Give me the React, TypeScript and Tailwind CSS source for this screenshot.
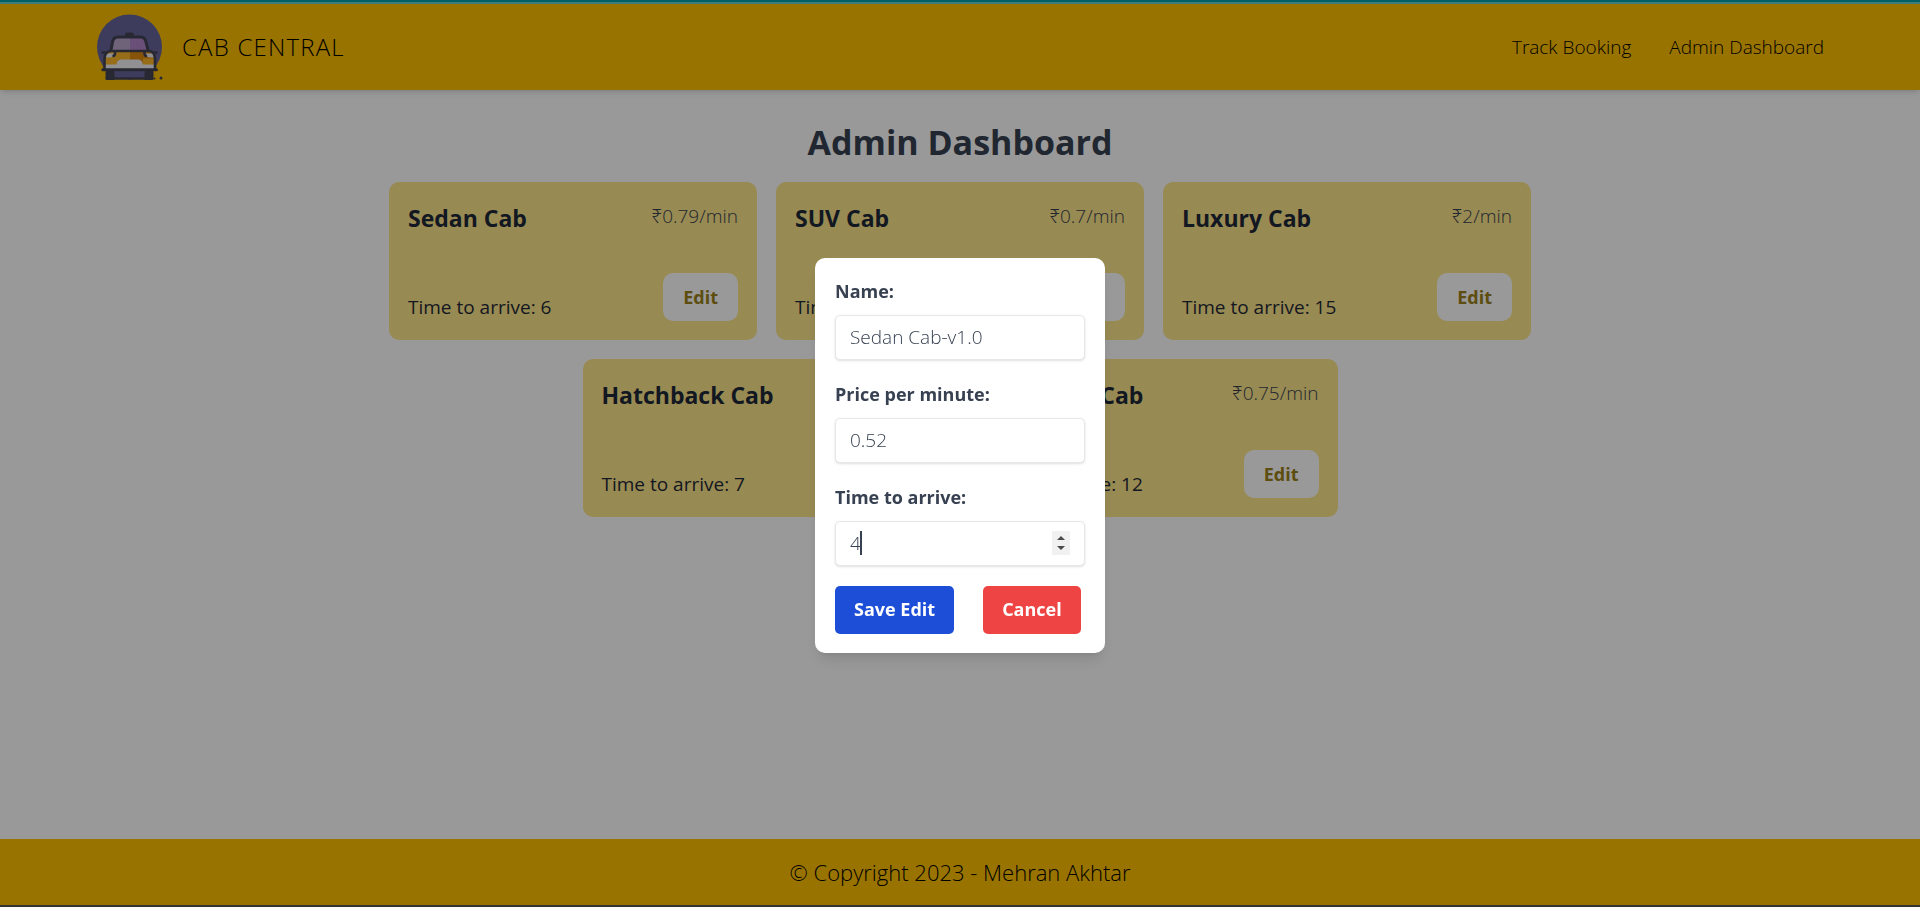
import { useState } from "react";

type Cab = { name: string; price: string; time: number };

const cabs: Cab[] = [
  { name: "Sedan Cab", price: "0.79", time: 6 },
  { name: "SUV Cab", price: "0.7", time: 10 },
  { name: "Luxury Cab", price: "2", time: 15 },
  { name: "Hatchback Cab", price: "0.85", time: 7 },
  { name: "Premium Cab", price: "0.75", time: 12 },
];

function Logo() {
  return (
    <svg viewBox="-1 -2 68 70" className="h-[70px] w-[68px]" aria-hidden="true">
      <circle cx="32.5" cy="33" r="32.5" fill="#68659c" />
      <rect x="10" y="57" width="46" height="8" fill="#68659c" />
      <path d="M14 38 L16 27 Q17 23.500 21 23.500 H33 V38 Z" fill="#b9a6cc" />
      <path d="M33 23.500 H43 Q48 23.500 49 27 L51 38 H33 Z" fill="#b184c9" />
      <path d="M8 55 V44 Q8 38 13 38 H33 V55 Z" fill="#fdb62b" />
      <path d="M33 38 H52 Q58 38 58 44 V55 H33 Z" fill="#e08a10" />
      <path d="M46 44.500 H58 V52 H46 Z" fill="#fdb62b" />
      <path d="M8.500 39.500 H17.500 Q17.500 43.500 12 43.500 H8.500 Z" fill="#f0eef2" />
      <path d="M48.500 39.500 H57.500 V43.500 H54 Q48.500 43.500 48.500 39.500 Z" fill="#f0eef2" />
      <path d="M8 50.500 H19.500 Q20 45.500 25 45.500 H41 Q45 45.500 46 50.500 H58 V55.500 H8 Z" fill="#f2f0f4" />
      <rect x="28" y="18.500" width="9" height="5" rx="2" fill="#434456" />
      <g fill="none" stroke="#434456" strokeLinecap="round" strokeLinejoin="round">
        <path d="M14 36 L15.500 28 Q16.500 23 21 23 H43.500 Q48 23 49 28 L51 36" strokeWidth="3" />
        <path d="M7.500 55 V45 Q7.500 37.500 14 37 H52 Q58 37.500 58 45 V55" strokeWidth="2.600" />
        <path d="M18 38 Q18.500 41 16.500 42" strokeWidth="2.600" />
        <path d="M47.500 38 Q47 41 49 42" strokeWidth="2.600" />
        <path d="M5.500 38.500 H9 M56.500 38.500 H59.500" strokeWidth="2.600" />
        <path d="M5.800 55.800 H59.500" strokeWidth="3" />
        <path d="M10 64.500 H55" strokeWidth="2.600" />
      </g>
      <rect x="8.500" y="57" width="9" height="9" rx="1" fill="#434456" />
      <rect x="47.500" y="57" width="9" height="9" rx="1" fill="#434456" />
      <circle cx="57.500" cy="64.500" r="1" fill="#434456" />
      <circle cx="64" cy="64" r="1.500" fill="#434456" />
    </svg>
  );
}

function CabCard({ cab }: { cab: Cab }) {
  return (
    <article className="flex w-[368px] flex-col gap-[38px] rounded-[10px] bg-[#fde68a] p-[19px]">
      <div className="flex items-start justify-between">
        <h2 className="text-[23px] leading-[34px] font-bold text-[#1f2937]">{cab.name}</h2>
        <p className="text-[19px] leading-[30px] font-light text-[#374151]">₹{cab.price}/min</p>
      </div>
      <div className="flex items-end justify-between">
        <p className="text-[19px] leading-[28px] font-normal text-[#1f2937]">Time to arrive: {cab.time}</p>
        <button type="button" className="h-12 rounded-[10px] bg-white px-5 text-[18px] font-bold text-[#9c8019]">
          Edit
        </button>
      </div>
    </article>
  );
}

const fieldClass =
  "block h-[45px] w-full rounded-[5px] border border-gray-200 bg-white px-[14px] text-[19px] font-light text-[#374151] shadow-sm outline-none";
const labelClass = "mb-[9px] block text-[18px] leading-[29px] font-bold text-[#374151]";

function EditDialog() {
  const [name, setName] = useState("Sedan Cab-v1.0");
  const [price, setPrice] = useState("0.52");
  const [time, setTime] = useState("4");
  return (
    <div className="fixed inset-0 flex items-center justify-center bg-black/40">
      <form
        role="dialog"
        aria-label="Edit cab"
        className="mt-[3px] flex w-[290px] flex-col gap-[20px] rounded-[10px] bg-white px-5 py-[19px] shadow-lg"
        onSubmit={(e) => e.preventDefault()}
      >
        <div>
          <label htmlFor="name" className={labelClass}>Name:</label>
          <input id="name" type="text" className={fieldClass} value={name} onChange={(e) => setName(e.target.value)} />
        </div>
        <div>
          <label htmlFor="price" className={labelClass}>Price per minute:</label>
          <input id="price" type="text" inputMode="decimal" className={fieldClass} value={price} onChange={(e) => setPrice(e.target.value)} />
        </div>
        <div>
          <label htmlFor="time" className={labelClass}>Time to arrive:</label>
          <div className="relative">
            <input
              id="time"
              type="number"
              className={`${fieldClass} caret-transparent [&::-webkit-inner-spin-button]:appearance-none`}
              value={time}
              onChange={(e) => setTime(e.target.value)}
            />
            <span className="absolute top-[10px] left-[25px] h-6 w-[2px] bg-[#374151]" />
            <span className="absolute top-[10px] right-[15px] flex h-6 w-[18px] items-center justify-center bg-[#f1f1f1]">
              <svg viewBox="0 0 18 24" className="h-6 w-[18px]" fill="#4a4a4a" aria-hidden="true">
                <path d="M5 9 L9 5 L13 9 Z" />
                <path d="M5 15 L9 19 L13 15 Z" />
              </svg>
            </span>
          </div>
        </div>
        <div className="flex gap-[29px]">
          <button type="submit" className="h-12 rounded-[5px] bg-[#1d4ed8] px-[19px] text-[18px] font-bold text-white">
            Save Edit
          </button>
          <button type="button" className="h-12 rounded-[5px] bg-[#ef4444] px-[19px] text-[18px] font-bold text-white">
            Cancel
          </button>
        </div>
      </form>
    </div>
  );
}

export default function App() {
  return (
    <div className="flex min-h-screen flex-col bg-white font-['Open_Sans','Noto_Sans',sans-serif]">
      <div className="h-[2px] bg-[#00a0a8]" />
      <div className="h-[2px] bg-[#6ad0d0]" />
      <header className="flex h-[86px] items-center justify-between bg-[#ffc000] px-24 shadow-md">
        <a href="#home" className="flex items-center gap-[18px]">
          <Logo />
          <span className="text-[24px] font-light tracking-wider text-black">CAB CENTRAL</span>
        </a>
        <nav className="flex gap-[38px] text-[19px] font-light text-black">
          <a href="#track">Track Booking</a>
          <a href="#admin">Admin Dashboard</a>
        </nav>
      </header>
      <main className="flex grow flex-col items-center gap-4 pt-7">
        <h1 className="text-[34px] leading-[48px] font-bold text-[#374151]">Admin Dashboard</h1>
        <section className="flex max-w-[1160px] flex-wrap justify-center gap-[19px]">
          {cabs.map((cab) => (
            <CabCard key={cab.name} cab={cab} />
          ))}
        </section>
      </main>
      <footer className="border-b-2 border-[#555555] bg-[#ffc000] py-4 text-center text-[22px] leading-[34px] font-light text-black">
        © Copyright 2023 - Mehran Akhtar
      </footer>
      <EditDialog />
    </div>
  );
}
